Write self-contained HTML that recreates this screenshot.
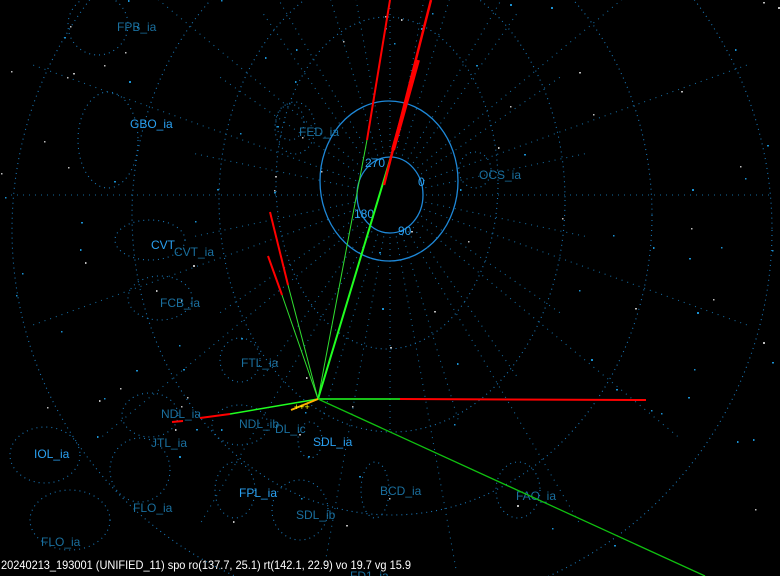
<!DOCTYPE html>
<html><head><meta charset="utf-8"><style>
html,body{margin:0;padding:0;background:#000;width:780px;height:576px;overflow:hidden}
svg{display:block}
text{font-family:"Liberation Sans",sans-serif;font-size:12px}
.d{fill:#1a6f9e}.b{fill:#2aa0f0}
</style></head><body>
<svg id="s" width="780" height="576" viewBox="0 0 780 576" style="overflow:hidden">
<g id="grid" fill="none" stroke="#1a78b8" stroke-width="1.1" stroke-dasharray="1 4">
<ellipse cx="387" cy="183" rx="111" ry="166"/>
<ellipse cx="392" cy="200" rx="173" ry="232"/>
<ellipse cx="392" cy="215" rx="260" ry="300"/>
<ellipse cx="392" cy="230" rx="380" ry="380"/>
<ellipse cx="98" cy="25" rx="30" ry="30"/>
<ellipse cx="108" cy="140" rx="30" ry="48"/>
<ellipse cx="295" cy="128" rx="20" ry="26"/>
<ellipse cx="290" cy="122" rx="14" ry="18"/>
<ellipse cx="475" cy="170" rx="16" ry="18"/>
<ellipse cx="150" cy="240" rx="35" ry="20"/>
<ellipse cx="160" cy="298" rx="32" ry="22"/>
<ellipse cx="240" cy="360" rx="20" ry="22"/>
<ellipse cx="150" cy="415" rx="28" ry="22"/>
<ellipse cx="240" cy="425" rx="28" ry="20"/>
<ellipse cx="140" cy="470" rx="30" ry="32"/>
<ellipse cx="45" cy="455" rx="35" ry="28"/>
<ellipse cx="235" cy="490" rx="20" ry="28"/>
<ellipse cx="300" cy="510" rx="28" ry="30"/>
<ellipse cx="310" cy="440" rx="12" ry="18"/>
<ellipse cx="375" cy="490" rx="14" ry="28"/>
<ellipse cx="518" cy="490" rx="22" ry="28"/>
<ellipse cx="70" cy="520" rx="40" ry="30"/>
</g>
<g fill="none" stroke="#1e88d8" stroke-width="1.3">
<ellipse cx="390" cy="195" rx="33" ry="38"/>
<ellipse cx="389" cy="181" rx="69" ry="80"/>
</g>
<g id="rad" stroke="#156a9e" stroke-width="1.1" stroke-dasharray="1 5"></g>
<g id="stars" fill="#bbb"></g>
<g font-size="12">
<text x="117" y="31" class="d">FPB_ia</text>
<text x="130" y="128" class="b">GBO_ia</text>
<text x="299" y="136" class="d">FED_ia</text>
<text x="479" y="179" class="d">OCS_ia</text>
<text x="365" y="167" class="b">270</text>
<text x="418" y="186" class="b">0</text>
<text x="354" y="218" class="b">180</text>
<text x="398" y="235" class="b">90</text>
<text x="151" y="249" class="b">CVT</text>
<text x="174" y="256" class="d">CVT_ia</text>
<text x="160" y="307" class="d">FCB_ia</text>
<text x="241" y="367" class="d">FTL_ia</text>
<text x="161" y="418" class="d">NDL_ia</text>
<text x="239" y="428" class="d">NDL_ib</text>
<text x="275" y="433" class="d">DL_ic</text>
<text x="313" y="446" class="b">SDL_ia</text>
<text x="151" y="447" class="d">JTL_ia</text>
<text x="34" y="458" class="b">IOL_ia</text>
<text x="239" y="497" class="b">FPL_ia</text>
<text x="380" y="495" class="d">BCD_ia</text>
<text x="516" y="500" class="d">FAO_ia</text>
<text x="133" y="512" class="d">FLO_ia</text>
<text x="296" y="519" class="d">SDL_ib</text>
<text x="41" y="546" class="d">FLO_ia</text>
<text x="350" y="580" class="d">FD1_ia</text>
</g>
<g fill="none" stroke-linecap="butt">
<line x1="318" y1="399" x2="367" y2="140" stroke="#30e030" stroke-width="1"/>
<line x1="367" y1="140" x2="390" y2="0" stroke="#f00" stroke-width="2"/>
<line x1="318" y1="399" x2="396" y2="140" stroke="#20ff20" stroke-width="2"/>
<line x1="384" y1="185" x2="431" y2="0" stroke="#f00" stroke-width="2.5"/>
<line x1="393" y1="150" x2="418" y2="60" stroke="#f00" stroke-width="4"/>
<line x1="318" y1="399" x2="288" y2="285" stroke="#30e030" stroke-width="1"/>
<line x1="288" y1="285" x2="270" y2="212" stroke="#f00" stroke-width="2"/>
<line x1="318" y1="399" x2="282" y2="295" stroke="#30e030" stroke-width="1"/>
<line x1="282" y1="295" x2="268" y2="256" stroke="#f00" stroke-width="2"/>
<line x1="318" y1="399" x2="400" y2="399" stroke="#20ff20" stroke-width="1.5"/>
<line x1="400" y1="399" x2="646" y2="400" stroke="#f00" stroke-width="2"/>
<line x1="318" y1="399" x2="705" y2="576" stroke="#10c010" stroke-width="1.3"/>
<line x1="318" y1="399" x2="230" y2="414" stroke="#20ff20" stroke-width="1.5"/>
<line x1="230" y1="414" x2="200" y2="418" stroke="#f00" stroke-width="2"/>
<line x1="172" y1="422" x2="183" y2="421" stroke="#f00" stroke-width="2"/>
<line x1="318" y1="399" x2="291" y2="410" stroke="#ffb000" stroke-width="2"/>
</g>
<text x="294" y="410" style="font-size:9px;fill:#ff0">+++</text>
<text x="1" y="569" textLength="410" lengthAdjust="spacingAndGlyphs" style="fill:#fff;font-size:12px">20240213_193001 (UNIFIED_11) spo ro(137.7, 25.1) rt(142.1, 22.9) vo 19.7 vg 15.9</text>
</svg>
<script>
var ns="http://www.w3.org/2000/svg",r=document.getElementById("rad"),st=document.getElementById("stars");
for(var i=0;i<36;i++){var a=i*Math.PI/18,c=Math.cos(a),s=Math.sin(a);
var l=document.createElementNS(ns,"line");
l.setAttribute("x1",390+c*36);l.setAttribute("y1",195+s*42);
l.setAttribute("x2",390+c*(i%2?200:380));l.setAttribute("y2",195+s*(i%2?240:380));r.appendChild(l);}
var seed=7;function rnd(){seed=(seed*9301+49297)%233280;return seed/233280;}
for(var j=0;j<120;j++){var e=document.createElementNS(ns,"rect");
e.setAttribute("x",Math.floor(rnd()*780));e.setAttribute("y",Math.floor(rnd()*550));
e.setAttribute("width",rnd()<0.3?2:1.5);e.setAttribute("height",rnd()<0.3?2:1.5);
if(rnd()<0.5)e.setAttribute("fill","#1a90d0");st.appendChild(e);}
</script>
</body></html>
